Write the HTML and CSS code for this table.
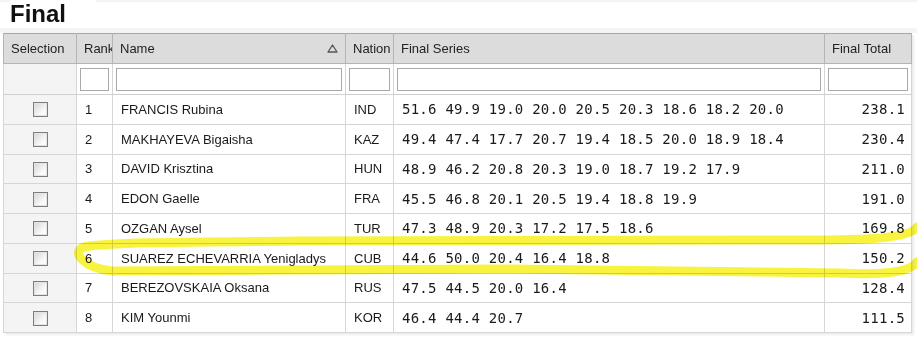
FILE: index.html
```html
<!DOCTYPE html>
<html>
<head>
<meta charset="utf-8">
<link rel="stylesheet" href="styles.css">
</head>
<body>
<div class="page">
  <div class="title-bar"><h1 class="title">Final</h1></div>
  <div class="grid-wrap">
    <table class="grid">
      <colgroup>
        <col class="c-sel"><col class="c-rank"><col class="c-name"><col class="c-nat"><col class="c-series"><col class="c-total">
      </colgroup>
      <thead>
        <tr class="hdr">
          <th>Selection</th>
          <th class="clip">Rank</th>
          <th><div class="hname"><span>Name</span><svg class="sort" width="11" height="9" viewBox="0 0 11 9"><path d="M5.5 1 L10 8 L1 8 Z" fill="none" stroke="#555" stroke-width="1.3" stroke-linejoin="round"/></svg></div></th>
          <th>Nation</th>
          <th>Final Series</th>
          <th>Final Total</th>
        </tr>
        <tr class="filter">
          <td class="sel"></td>
          <td><div class="fbox"></div></td>
          <td><div class="fbox"></div></td>
          <td><div class="fbox"></div></td>
          <td><div class="fbox"></div></td>
          <td><div class="fbox"></div></td>
        </tr>
      </thead>
      <tbody>
        <tr><td class="sel"><span class="cb"></span></td><td>1</td><td>FRANCIS Rubina</td><td>IND</td><td class="mono">51.6 49.9 19.0 20.0 20.5 20.3 18.6 18.2 20.0</td><td class="mono tot">238.1</td></tr>
        <tr><td class="sel"><span class="cb"></span></td><td>2</td><td>MAKHAYEVA Bigaisha</td><td>KAZ</td><td class="mono">49.4 47.4 17.7 20.7 19.4 18.5 20.0 18.9 18.4</td><td class="mono tot">230.4</td></tr>
        <tr><td class="sel"><span class="cb"></span></td><td>3</td><td>DAVID Krisztina</td><td>HUN</td><td class="mono">48.9 46.2 20.8 20.3 19.0 18.7 19.2 17.9</td><td class="mono tot">211.0</td></tr>
        <tr><td class="sel"><span class="cb"></span></td><td>4</td><td>EDON Gaelle</td><td>FRA</td><td class="mono">45.5 46.8 20.1 20.5 19.4 18.8 19.9</td><td class="mono tot">191.0</td></tr>
        <tr><td class="sel"><span class="cb"></span></td><td>5</td><td>OZGAN Aysel</td><td>TUR</td><td class="mono">47.3 48.9 20.3 17.2 17.5 18.6</td><td class="mono tot">169.8</td></tr>
        <tr><td class="sel"><span class="cb"></span></td><td>6</td><td>SUAREZ ECHEVARRIA Yenigladys</td><td>CUB</td><td class="mono">44.6 50.0 20.4 16.4 18.8</td><td class="mono tot">150.2</td></tr>
        <tr><td class="sel"><span class="cb"></span></td><td>7</td><td>BEREZOVSKAIA Oksana</td><td>RUS</td><td class="mono">47.5 44.5 20.0 16.4</td><td class="mono tot">128.4</td></tr>
        <tr><td class="sel"><span class="cb"></span></td><td>8</td><td>KIM Younmi</td><td>KOR</td><td class="mono">46.4 44.4 20.7</td><td class="mono tot">111.5</td></tr>
      </tbody>
    </table>
  </div>
  <svg class="marker" width="917" height="351" viewBox="0 0 917 351">
    <path d="M917 227 C912 236 880 240 820 240 L300 241 C200 242 110 242 84 247 C70 252 84 268 112 271 L500 269 L840 273 C880 275 910 273 917 262" fill="none" stroke="#f6f22a" stroke-width="9" stroke-linecap="round" stroke-linejoin="round"/>
  </svg>
</div>
</body>
</html>
```
FILE: styles.css
```css
html, body {
  margin: 0;
  padding: 0;
  background: #ffffff;
}
.page {
  position: relative;
  width: 917px;
  height: 351px;
  overflow: hidden;
  font-family: "Liberation Sans", Arial, sans-serif;
  color: #1a1a1a;
}
.title-bar {
  height: 33px;
  padding-left: 10px;
  background: linear-gradient(#f4f4f4 0 2px, #fff 2px 28px, #f4f4f4 28px);
}
.title {
  margin: 0;
  display: inline-block;
  background: #fff;
  padding-right: 30px;
  height: 28px;
  font-size: 24px;
  font-weight: bold;
  line-height: 27px;
  color: #111;
}
.grid-wrap {
  padding-left: 3px;
}
.grid {
  border-collapse: collapse;
  table-layout: fixed;
  width: 908px;
  border: 1px solid #a6a6a6;
  box-shadow: 2px 2px 2px #ececec;
  font-size: 13px;
}
.c-sel { width: 73px; }
.c-rank { width: 36px; }
.c-name { width: 233px; }
.c-nat { width: 48px; }
.c-series { width: 431px; }
.c-total { width: 87px; }
.grid th {
  height: 29px;
  background: #dcdcdc;
  font-weight: normal;
  text-align: left;
  padding: 0 0 0 7px;
  color: #222;
  border: 1px solid #b4b4b4;
  border-top: none;
  white-space: nowrap;
  overflow: hidden;
}
.grid th.clip { text-overflow: clip; }
.hname {
  display: flex;
  align-items: center;
  justify-content: space-between;
  padding-right: 7px;
}
.sort { display: block; }
.grid td {
  height: 28.75px;
  padding: 0 0 0 8px;
  border: 1px solid #d6d6d6;
  white-space: nowrap;
  overflow: hidden;
}
.grid .filter td {
  height: 30px;
  padding: 0 3px 0 3px;
  border-bottom: 1px solid #cfcfcf;
}
.grid .filter td.sel { padding: 0; }
.fbox {
  height: 21px;
  border: 1px solid #a9a9a9;
  background: #fff;
}
.grid td.sel {
  background: #f4f4f4;
  text-align: center;
  padding: 0;
}
.cb {
  display: inline-block;
  width: 13px;
  height: 13px;
  border: 1px solid #7d7d7d;
  background: linear-gradient(135deg, #d4d4d4, #fbfbfb 70%);
  vertical-align: middle;
  box-shadow: inset 0 0 0 1px #e4e4e4;
}
.mono {
  font-family: "DejaVu Sans Mono", "Liberation Mono", monospace;
  font-size: 14px;
  letter-spacing: 0.25px;
  color: #1a1a1a;
}
.grid td.tot {
  text-align: right;
  padding-right: 6px;
}
.marker {
  position: absolute;
  left: 0;
  top: 0;
  pointer-events: none;
  mix-blend-mode: multiply;
  opacity: 0.9;
}
```
